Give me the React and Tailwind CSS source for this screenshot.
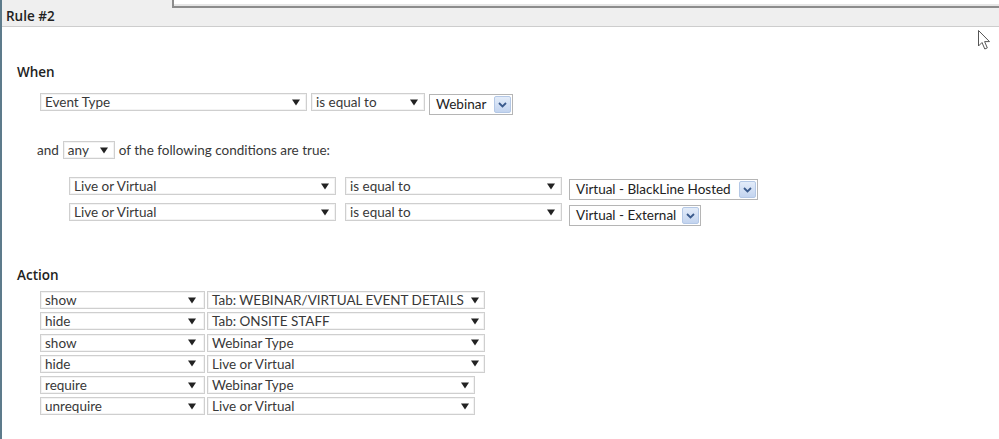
import React from "react";

const Arrow = () => (
  <svg width="8" height="7" viewBox="0 0 8 7" className="shrink-0">
    <path d="M0 0.5 H8 L4 6.5 Z" fill="#222" />
  </svg>
);

function Sel({ w, text, pr = "pr-[6px]" }) {
  return (
    <div
      className={`flex h-[18px] items-center justify-between border border-[#cfcfcf] bg-white pl-[4px] ${pr} text-[13.5px] leading-[16px] text-[#383838] shadow-[inset_0_0_0_1px_#f3f3f3]`}
      style={{ width: w }}
    >
      <span className="whitespace-nowrap">{text}</span>
      <Arrow />
    </div>
  );
}

function OldSel({ w, text }) {
  return (
    <div
      className="flex h-[21px] items-center justify-between border border-[#b5b5b5] bg-white pl-[6px] pr-[1px] text-[13.5px] leading-[17px] text-[#222]"
      style={{ width: w }}
    >
      <span className="whitespace-nowrap">{text}</span>
      <div className="flex h-[17px] w-[17px] shrink-0 items-center justify-center rounded-[2px] border border-[#b4c8e6] bg-gradient-to-b from-[#e3ecf9] to-[#c3d4ef]">
        <svg width="9" height="6" viewBox="0 0 9 6">
          <path d="M1 1 L4.5 4.5 L8 1" fill="none" stroke="#3a5a8c" strokeWidth="1.8" />
        </svg>
      </div>
    </div>
  );
}

export default function App() {
  const actions = [
    ["show", "Tab: WEBINAR/VIRTUAL EVENT DETAILS", 278],
    ["hide", "Tab: ONSITE STAFF", 278],
    ["show", "Webinar Type", 278],
    ["hide", "Live or Virtual", 278],
    ["require", "Webinar Type", 268],
    ["unrequire", "Live or Virtual", 268],
  ];
  return (
    <div
      className="relative h-[439px] w-[999px] overflow-hidden border-l-2 border-[#5d7b8b] bg-white"
      style={{ fontFamily: "Lato, 'Open Sans', sans-serif" }}
    >
      {/* header */}
      <div className="flex h-[27px] flex-col border-b border-[#cdcdcd] bg-[#efefef]">
        <div className="ml-[170px] h-[8px] border-b-2 border-l-2 border-[#8c8c8c] bg-white shadow-[inset_0_-2px_0_#e6e6e6]" />
        <div
          className="pl-[4px] text-[13.5px] font-semibold leading-[17px] text-[#222]"
          style={{ fontFamily: "'Open Sans', sans-serif" }}
        >
          Rule #2
        </div>
      </div>

      <div className="flex flex-col pl-[15px]">
        <div
          className="mt-[36px] h-[18px] text-[13.5px] font-semibold leading-[18px] text-[#222]"
          style={{ fontFamily: "'Open Sans', sans-serif" }}
        >
          When
        </div>

        <div className="ml-[23px] mt-[12px] flex h-[22px] items-start">
          <Sel w={267} text="Event Type" />
          <div className="ml-[4px]">
            <Sel w={114} text="is equal to" />
          </div>
          <div className="ml-[4px] mt-[1px]">
            <OldSel w={84} text="Webinar" />
          </div>
        </div>

        <div className="ml-[20px] mt-[26px] flex h-[18px] items-center text-[13.5px] leading-[18px] text-[#383838]">
          <span>and</span>
          <div className="ml-[4px] mr-[4px]">
            <Sel w={52} text="any" />
          </div>
          <span>of the following conditions are true:</span>
        </div>

        <div className="ml-[52px] mt-[18px] flex flex-col gap-[4px]">
          {[
            ["Virtual - BlackLine Hosted", 189],
            ["Virtual - External", 132],
          ].map(([v, w]) => (
            <div key={v} className="flex h-[22px] items-start">
              <Sel w={267} text="Live or Virtual" />
              <div className="ml-[9px]">
                <Sel w={217} text="is equal to" />
              </div>
              <div className="ml-[7px] mt-[2px]">
                <OldSel w={w} text={v} />
              </div>
            </div>
          ))}
        </div>

        <div
          className="mt-[41px] h-[18px] text-[13.5px] font-semibold leading-[18px] text-[#222]"
          style={{ fontFamily: "'Open Sans', sans-serif" }}
        >
          Action
        </div>

        <div className="ml-[23px] mt-[7px] flex flex-col gap-[2.25px]">
          {actions.map(([a, b, w], i) => (
            <div key={i} className="flex h-[19px] items-start gap-[2px]">
              <Sel w={165} text={a} pr="pr-[8px]" />
              <Sel w={w} text={b} pr="pr-[5px]" />
            </div>
          ))}
        </div>
      </div>

      {/* mouse cursor overlay */}
      <svg
        className="absolute left-[975px] top-[29px]"
        width="16"
        height="23"
        viewBox="0 0 16 23"
      >
        <path
          d="M1.5 1.5 L1.5 17 L5 13.5 L7.8 20 L10.3 18.9 L7.6 12.6 L12.5 12.6 Z"
          fill="#fff"
          stroke="#555"
          strokeWidth="1"
          strokeLinejoin="round"
        />
      </svg>
    </div>
  );
}
